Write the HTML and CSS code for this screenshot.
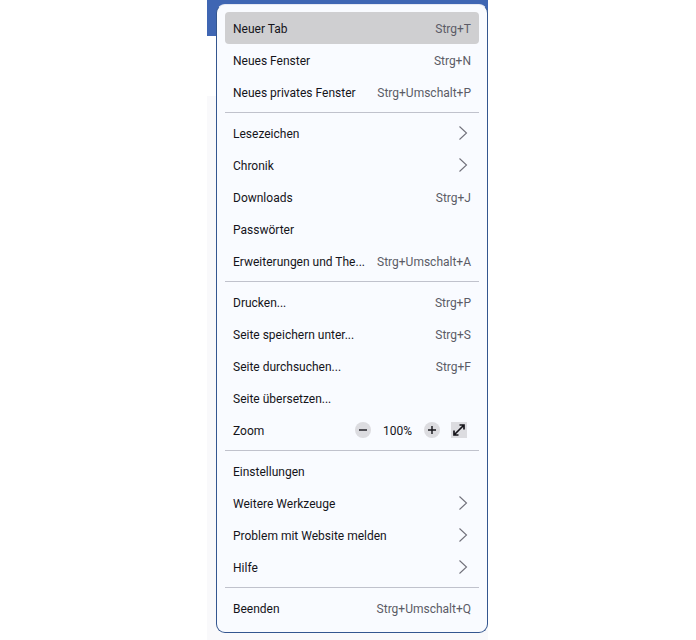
FILE: index.html
```html
<!DOCTYPE html>
<html lang="de">
<head>
<meta charset="utf-8">
<title>Menü</title>
<link rel="stylesheet" href="styles.css">
</head>
<body>
<div class="backdrop">
  <div class="band"></div>
  <div class="gap"></div>
  <div class="content"></div>
</div>
<nav class="menu">
  <div class="item active"><span>Neuer Tab</span><span class="key">Strg+T</span></div>
  <div class="item"><span>Neues Fenster</span><span class="key">Strg+N</span></div>
  <div class="item"><span>Neues privates Fenster</span><span class="key">Strg+Umschalt+P</span></div>
  <hr class="sep">
  <div class="item"><span>Lesezeichen</span><svg class="chev" viewBox="0 0 10 16"><path d="M1.5 1.5 8.5 8 1.5 14.5"/></svg></div>
  <div class="item"><span>Chronik</span><svg class="chev" viewBox="0 0 10 16"><path d="M1.5 1.5 8.5 8 1.5 14.5"/></svg></div>
  <div class="item"><span>Downloads</span><span class="key">Strg+J</span></div>
  <div class="item"><span>Passwörter</span></div>
  <div class="item"><span>Erweiterungen und The...</span><span class="key">Strg+Umschalt+A</span></div>
  <hr class="sep">
  <div class="item"><span>Drucken...</span><span class="key">Strg+P</span></div>
  <div class="item"><span>Seite speichern unter...</span><span class="key">Strg+S</span></div>
  <div class="item"><span>Seite durchsuchen...</span><span class="key">Strg+F</span></div>
  <div class="item"><span>Seite übersetzen...</span></div>
  <div class="item zoom-row"><span>Zoom</span>
    <div class="zoom">
      <span class="round"><svg viewBox="0 0 16 16"><path d="M4 8h8"/></svg></span>
      <span class="pct">100%</span>
      <span class="round"><svg viewBox="0 0 16 16"><path d="M4 8h8M8 4v8"/></svg></span>
      <span class="full"><svg viewBox="0 0 16 16"><path d="M3.5 12.5 12.5 3.5M8.5 3h4.5v4.5M3 8.5V13h4.5"/></svg></span>
    </div>
  </div>
  <hr class="sep">
  <div class="item"><span>Einstellungen</span></div>
  <div class="item"><span>Weitere Werkzeuge</span><svg class="chev" viewBox="0 0 10 16"><path d="M1.5 1.5 8.5 8 1.5 14.5"/></svg></div>
  <div class="item"><span>Problem mit Website melden</span><svg class="chev" viewBox="0 0 10 16"><path d="M1.5 1.5 8.5 8 1.5 14.5"/></svg></div>
  <div class="item"><span>Hilfe</span><svg class="chev" viewBox="0 0 10 16"><path d="M1.5 1.5 8.5 8 1.5 14.5"/></svg></div>
  <hr class="sep">
  <div class="item"><span>Beenden</span><span class="key">Strg+Umschalt+Q</span></div>
</nav>
</body>
</html>
```
FILE: styles.css
```css
* { box-sizing: border-box; }
html, body { margin: 0; height: 640px; overflow: hidden; background: #fff; }
body { position: relative; font-family: Roboto, "Open Sans", sans-serif; }
.backdrop { width: 281px; height: 640px; margin-left: 207px; display: flex; flex-direction: column; }
.band { height: 36px; background: #3f66b3; }
.gap { height: 60px; background: #fff; }
.content { flex: 1; background: #f9f9fb; }
.menu {
  position: absolute; left: 216px; top: 4px; width: 272px; height: 629px;
  padding: 7px 8px 8px 8px;
  background: #f9fbff; border: 1px solid #34568f; border-top-color: #e5e8f2; border-radius: 9px;
}
.item {
  height: 32px; padding: 1px 8px 0; border-radius: 4px;
  display: flex; align-items: center; justify-content: space-between;
  font-size: 12px; color: #15141a; white-space: nowrap;
}
.active { background: #cfcfd1; }
.key { color: #5b5b66; }
.sep { height: 1px; margin: 4px 0; border: 0; background: #c0c2cc; }
.chev { width: 10px; height: 16px; margin: -1px 3px 0 0; fill: none; stroke: #70707a; stroke-width: 1.1; }
.zoom { display: flex; align-items: center; margin: -1px 4px 0 0; }
.round { width: 16px; height: 16px; border-radius: 50%; background: #dcdce0; display: flex; }
.round:first-child { margin-left: 1px; }
.round svg, .full svg { width: 16px; height: 16px; fill: none; stroke: #15141a; stroke-width: 1.4; }
.pct { width: 53px; padding-top: 1px; text-align: center; color: #15141a; }
.full { width: 16px; height: 16px; margin-left: 11px; background: #dcdce0; display: flex; }
.full svg { stroke-width: 1.7; }
```
